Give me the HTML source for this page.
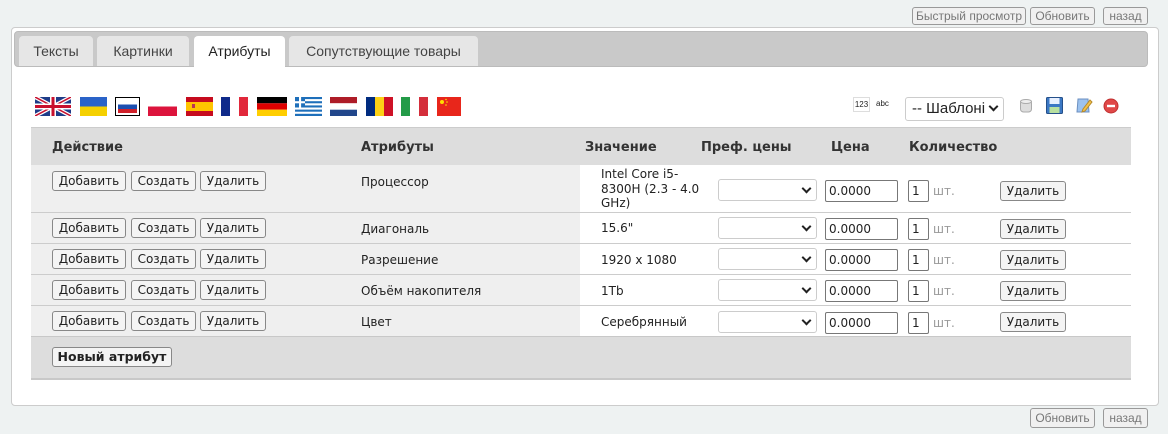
<!DOCTYPE html>
<html><head><meta charset="utf-8"><style>
*{box-sizing:border-box;margin:0;padding:0}
body{width:1168px;height:434px;background:#eef2f2;position:relative;overflow:hidden;font-family:"DejaVu Sans","Liberation Sans",sans-serif;font-size:12px;color:#222}
.a{position:absolute}
.btn{position:absolute;height:20px;border:1px solid #888;border-radius:3px;background:#f4f4f4;font-size:12px;line-height:18px;text-align:center;color:#222;white-space:nowrap}
.tb{color:#777;border-color:#999;background:#f0f0f0;font-family:"Liberation Sans",sans-serif;font-size:12px}
.tab{position:absolute;top:36px;height:30px;background:#e6e6e6;border-radius:4px 4px 0 0;font-family:"Liberation Sans",sans-serif;font-size:14px;line-height:30px;text-align:center;color:#444}
.flag{position:absolute;top:97px;height:19px}
.hd{position:absolute;top:140px;font-weight:bold;font-size:13px;color:#333}
.inp{position:absolute;height:22px;border:1px solid #777;border-radius:2px;background:#fff;font-size:12px;line-height:20px;padding-left:3px}
.sel{position:absolute;height:22px;width:99px;border:1px solid #ccc;border-radius:3px;background:#fff}
.sel:after{content:"";position:absolute;right:6px;top:5px;width:5px;height:5px;border-right:2px solid #222;border-bottom:2px solid #222;transform:rotate(45deg)}
</style></head><body>
<div class="btn tb" style="left:912px;top:7px;width:114px;height:18px;line-height:16px">Быстрый просмотр</div>
<div class="btn tb" style="left:1030px;top:7px;width:65px;height:18px;line-height:16px">Обновить</div>
<div class="btn tb" style="left:1103px;top:7px;width:45px;height:18px;line-height:16px">назад</div>

<div class="a" style="left:11px;top:27px;width:1148px;height:379px;background:#fff;border:1px solid #ccc;border-radius:4px"></div>
<div class="a" style="left:14px;top:31px;width:1134px;height:36px;background:#c9c9c9;border-radius:4px;border:1px solid #bbb"></div>
<div class="tab" style="left:19px;width:74px">Тексты</div>
<div class="tab" style="left:97px;width:92px">Картинки</div>
<div class="tab" style="left:194px;width:91px;height:32px;background:#fff;color:#222">Атрибуты</div>
<div class="tab" style="left:289px;width:189px">Сопутствующие товары</div>

<svg class="flag" style="left:35px" width="36" height="19" viewBox="0 0 36 19"><rect width="36" height="19" fill="#1f3c88"/><path d="M0 0L36 19M36 0L0 19" stroke="#fff" stroke-width="4"/><path d="M0 0L36 19M36 0L0 19" stroke="#c8102e" stroke-width="1.5"/><path d="M18 0V19M0 9.5H36" stroke="#fff" stroke-width="6"/><path d="M18 0V19M0 9.5H36" stroke="#c8102e" stroke-width="3"/></svg>
<svg class="flag" style="left:80px" width="27" height="19"><rect width="27" height="9.5" fill="#2a63c8"/><rect y="9.5" width="27" height="9.5" fill="#f5d000"/></svg>
<svg class="flag" style="left:115px" width="25" height="19"><rect x=".5" y=".5" width="24" height="18" fill="#fff" stroke="#000"/><rect x="3" y="3" width="19" height="4.5" fill="#fff"/><rect x="3" y="7.5" width="19" height="4.5" fill="#1c4fb0"/><rect x="3" y="12" width="19" height="4" fill="#d0202a"/></svg>
<svg class="flag" style="left:148px" width="29" height="19"><rect width="29" height="9.5" fill="#fff"/><rect y="9.5" width="29" height="9.5" fill="#dc143c"/></svg>
<svg class="flag" style="left:186px" width="27" height="19"><rect width="27" height="19" fill="#c60b1e"/><rect y="5" width="27" height="9" fill="#ffc400"/><rect x="6" y="7" width="3" height="4" fill="#b35"/></svg>
<svg class="flag" style="left:221px" width="27" height="19"><rect width="9" height="19" fill="#0f2a8a"/><rect x="9" width="9" height="19" fill="#fff"/><rect x="18" width="9" height="19" fill="#e1283b"/></svg>
<svg class="flag" style="left:257px" width="30" height="19"><rect width="30" height="6.3" fill="#000"/><rect y="6.3" width="30" height="6.4" fill="#dd0000"/><rect y="12.7" width="30" height="6.3" fill="#ffce00"/></svg>
<svg class="flag" style="left:295px" width="27" height="19"><rect width="27" height="19" fill="#1e6fba"/><g fill="#fff"><rect y="2.1" width="27" height="2.1"/><rect y="6.3" width="27" height="2.1"/><rect y="10.5" width="27" height="2.1"/><rect y="14.7" width="27" height="2.1"/><rect width="10" height="10.5" fill="#1e6fba"/><rect x="4" width="2.1" height="10.5"/><rect y="4.2" width="10" height="2.1"/></g></svg>
<svg class="flag" style="left:330px" width="27" height="19"><rect width="27" height="6.3" fill="#ae1c28"/><rect y="6.3" width="27" height="6.4" fill="#fff"/><rect y="12.7" width="27" height="6.3" fill="#21468b"/></svg>
<svg class="flag" style="left:366px" width="27" height="19"><rect width="9" height="19" fill="#002b7f"/><rect x="9" width="9" height="19" fill="#fcd116"/><rect x="18" width="9" height="19" fill="#ce1126"/></svg>
<svg class="flag" style="left:401px" width="27" height="19"><rect width="9" height="19" fill="#239b48"/><rect x="9" width="9" height="19" fill="#fff"/><rect x="18" width="9" height="19" fill="#d42e3b"/></svg>
<svg class="flag" style="left:437px" width="24" height="19"><rect width="24" height="19" fill="#e8261b"/><circle cx="5" cy="5" r="2" fill="#ffde00"/><circle cx="9" cy="2.5" r=".8" fill="#ffde00"/><circle cx="10" cy="5" r=".8" fill="#ffde00"/><circle cx="9" cy="8" r=".8" fill="#ffde00"/></svg>

<div class="a" style="left:853px;top:97px;width:17px;height:15px;border:1px solid #ddd;font-size:8px;line-height:13px;text-align:center;font-family:'Liberation Sans',sans-serif">123</div>
<div class="a" style="left:876px;top:99px;font-size:8px;font-family:'Liberation Sans',sans-serif">abc</div>
<div class="sel" style="left:905px;top:97px;height:24px;width:99px;font-size:15px;font-family:'Liberation Sans',sans-serif;line-height:22px;padding-left:6px;overflow:hidden;white-space:nowrap">-- Шаблоні</div>
<svg class="a" style="left:1019px;top:98px" width="14" height="16"><rect x="1.5" y="2" width="11" height="12" rx="3" fill="#ddd" stroke="#aaa"/><ellipse cx="7" cy="3.5" rx="5.5" ry="2" fill="#eee" stroke="#aaa"/></svg>
<svg class="a" style="left:1046px;top:97px" width="17" height="17"><rect x=".5" y=".5" width="16" height="16" rx="1" fill="#3b78c4" stroke="#25508a"/><rect x="3.5" y="1" width="10" height="6" fill="#e8f0ff"/><rect x="3.5" y="10" width="10" height="6" fill="#b8e0a0"/></svg>
<svg class="a" style="left:1075px;top:96px" width="18" height="18"><path d="M3 3H13L14 16H2Z" fill="#9cc2ee" stroke="#6b8fc0"/><path d="M8 13L15 4L17 6L10 15L7 16Z" fill="#f2c24a" stroke="#b5882a"/></svg>
<svg class="a" style="left:1103px;top:98px" width="16" height="16"><circle cx="8" cy="8" r="7" fill="#e04848" stroke="#c03030"/><rect x="4" y="6.8" width="8" height="2.4" fill="#fff"/></svg>

<div class="a" style="left:31px;top:127px;width:1100px;height:253px;background:#ddd;border-top:1px solid #ccc;border-bottom:2px solid #c8c8c8"></div>
<div class="hd" style="left:52px">Действие</div>
<div class="hd" style="left:361px">Атрибуты</div>
<div class="hd" style="left:585px">Значение</div>
<div class="hd" style="left:701px">Преф. цены</div>
<div class="hd" style="left:831px">Цена</div>
<div class="hd" style="left:909px">Количество</div>

<div class="a" style="left:31px;top:165px;width:549px;height:172px;background:#efefef"></div>
<div class="a" style="left:580px;top:165px;width:551px;height:172px;background:#fff"></div>

<div class="a" style="left:31px;top:212px;width:1100px;border-top:1px solid #ccc"></div>
<div class="a" style="left:31px;top:243px;width:1100px;border-top:1px solid #ccc"></div>
<div class="a" style="left:31px;top:274px;width:1100px;border-top:1px solid #ccc"></div>
<div class="a" style="left:31px;top:305px;width:1100px;border-top:1px solid #ccc"></div>
<div class="a" style="left:31px;top:336px;width:1100px;border-top:1px solid #c8c8c8"></div>

<div class="btn" style="left:52px;top:171px;width:74px">Добавить</div><div class="btn" style="left:131px;top:171px;width:65px">Создать</div><div class="btn" style="left:200px;top:171px;width:66px">Удалить</div>
<div class="a" style="left:361px;top:175px">Процессор</div>
<div class="a" style="left:601px;top:167px;line-height:14.5px">Intel Core i5-<br>8300H (2.3 - 4.0<br>GHz)</div>
<div class="sel" style="left:718px;top:179px"></div><div class="inp" style="left:825px;top:180px;width:73px">0.0000</div><div class="inp" style="left:908px;top:180px;width:21px">1</div><div class="a" style="left:933px;top:184px;color:#999">шт.</div><div class="btn" style="left:1000px;top:181px;width:66px">Удалить</div>

<div class="btn" style="left:52px;top:218px;width:74px">Добавить</div><div class="btn" style="left:131px;top:218px;width:65px">Создать</div><div class="btn" style="left:200px;top:218px;width:66px">Удалить</div>
<div class="a" style="left:361px;top:222px">Диагональ</div>
<div class="a" style="left:601px;top:221px">15.6"</div>
<div class="sel" style="left:718px;top:217px"></div><div class="inp" style="left:825px;top:218px;width:73px">0.0000</div><div class="inp" style="left:908px;top:218px;width:21px">1</div><div class="a" style="left:933px;top:222px;color:#999">шт.</div><div class="btn" style="left:1000px;top:219px;width:66px">Удалить</div>

<div class="btn" style="left:52px;top:249px;width:74px">Добавить</div><div class="btn" style="left:131px;top:249px;width:65px">Создать</div><div class="btn" style="left:200px;top:249px;width:66px">Удалить</div>
<div class="a" style="left:361px;top:253px">Разрешение</div>
<div class="a" style="left:601px;top:253px">1920 x 1080</div>
<div class="sel" style="left:718px;top:248px"></div><div class="inp" style="left:825px;top:249px;width:73px">0.0000</div><div class="inp" style="left:908px;top:249px;width:21px">1</div><div class="a" style="left:933px;top:253px;color:#999">шт.</div><div class="btn" style="left:1000px;top:250px;width:66px">Удалить</div>

<div class="btn" style="left:52px;top:280px;width:74px">Добавить</div><div class="btn" style="left:131px;top:280px;width:65px">Создать</div><div class="btn" style="left:200px;top:280px;width:66px">Удалить</div>
<div class="a" style="left:361px;top:284px">Объём накопителя</div>
<div class="a" style="left:601px;top:284px">1Tb</div>
<div class="sel" style="left:718px;top:279px"></div><div class="inp" style="left:825px;top:280px;width:73px">0.0000</div><div class="inp" style="left:908px;top:280px;width:21px">1</div><div class="a" style="left:933px;top:284px;color:#999">шт.</div><div class="btn" style="left:1000px;top:281px;width:66px">Удалить</div>

<div class="btn" style="left:52px;top:311px;width:74px">Добавить</div><div class="btn" style="left:131px;top:311px;width:65px">Создать</div><div class="btn" style="left:200px;top:311px;width:66px">Удалить</div>
<div class="a" style="left:361px;top:315px">Цвет</div>
<div class="a" style="left:601px;top:315px">Серебрянный</div>
<div class="sel" style="left:718px;top:311px"></div><div class="inp" style="left:825px;top:312px;width:73px">0.0000</div><div class="inp" style="left:908px;top:312px;width:21px">1</div><div class="a" style="left:933px;top:316px;color:#999">шт.</div><div class="btn" style="left:1000px;top:312px;width:66px">Удалить</div>

<div class="btn" style="left:52px;top:347px;width:120px;font-weight:bold;font-size:12.5px">Новый атрибут</div>

<div class="btn tb" style="left:1030px;top:408px;width:65px">Обновить</div>
<div class="btn tb" style="left:1103px;top:408px;width:45px">назад</div>
</body></html>
